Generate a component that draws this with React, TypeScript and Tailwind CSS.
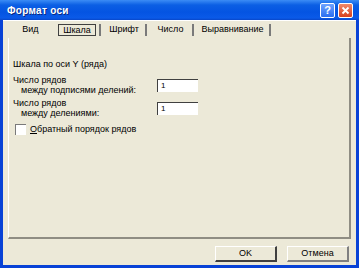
import React from 'react';

const tabs = [
  { label: 'Вид', w: 'w-[45px]', sep: false },
  { label: 'Шкала', w: 'w-[48px]', sep: true, active: true },
  { label: 'Шрифт', w: 'w-[46px]', sep: true },
  { label: 'Число', w: 'w-[47px]', sep: true },
  { label: 'Выравнивание', w: 'w-[77px]', sep: true },
];

const App: React.FC = () => {
  return (
    <div className="w-[359px] h-[268px] bg-[#0842d6] flex flex-col font-['Liberation_Sans',Arial,sans-serif] text-[9px] text-black overflow-hidden">

      {/* TITLE BAR */}
      <div className="h-[20px] shrink-0 flex items-center pl-[7px] pr-[6px] bg-[linear-gradient(180deg,#3b8cf5_0%,#0b5fe4_25%,#0454e2_60%,#0a5ae8_90%,#0846c8_100%)]">
        <span className="text-white font-bold text-[10px] tracking-[0.3px] [text-shadow:1px_1px_0_#0a2a80]">
          Формат оси
        </span>
        <div className="ml-auto flex items-center gap-[3px]">
          <div className="w-[15px] h-[15px] rounded-[2px] border border-white bg-[linear-gradient(180deg,#6fa3ff,#2a6ef0)] flex items-center justify-center text-white font-bold text-[11px] leading-none">
            ?
          </div>
          <div className="w-[15px] h-[15px] rounded-[2px] border border-white bg-[linear-gradient(180deg,#f08a6a,#d6401e)] flex items-center justify-center">
            <svg width="9" height="9" viewBox="0 0 9 9">
              <path d="M1.5 1.5 L7.5 7.5 M7.5 1.5 L1.5 7.5" stroke="white" strokeWidth="1.8" />
            </svg>
          </div>
        </div>
      </div>

      {/* BODY */}
      <div className="flex-1 mx-[3px] mb-[3px] bg-[#ece9d8] border-t border-white flex flex-col px-[5px]">

        {/* TABS */}
        <div className="h-[16px] mt-[1px] flex items-center">
          {tabs.map((t) => (
            <div key={t.label} className={`${t.w} h-full flex items-center justify-center relative`}>
              {t.active ? (
                <span className="border border-[#404040] px-[4px] h-[12px] leading-[10px]">{t.label}</span>
              ) : (
                <span>{t.label}</span>
              )}
              {t.sep && <div className="absolute right-0 top-[2px] h-[12px] w-[2px] bg-[#7a7a7a]" />}
            </div>
          ))}
        </div>

        {/* PANEL */}
        <div className="h-[201px] border-r-[2px] border-b-[2px] border-[#8f8d83] border-l border-l-white pl-[4px] pt-[21px]">
          <div className="h-[11px] leading-[11px]">Шкала по оси Y (ряда)</div>

          <div className="mt-[6px] flex">
            <div className="w-[144px]">
              <div className="leading-[9px]">Число рядов</div>
              <div className="leading-[10px] pl-[8px]">между подписями делений:</div>
            </div>
            <div className="mt-[3px] w-[41px] h-[13px] bg-white border-l border-t border-[#404040] text-[8px] leading-[12px] pl-[3px]">1</div>
          </div>

          <div className="mt-[4px] flex">
            <div className="w-[144px]">
              <div className="leading-[9px]">Число рядов</div>
              <div className="leading-[10px] pl-[8px]">между делениями:</div>
            </div>
            <div className="mt-[3px] w-[41px] h-[13px] bg-white border-l border-t border-[#404040] text-[8px] leading-[12px] pl-[3px]">1</div>
          </div>

          <div className="mt-[5px] flex items-center gap-[4px] pl-[2px]">
            <div className="w-[11px] h-[11px] bg-white border-l border-t border-[#7a7a7a]" />
            <span><span className="underline">О</span>братный порядок рядов</span>
          </div>
        </div>

        {/* BUTTONS */}
        <div className="flex justify-end gap-[10px] mt-[7px] pr-[2px]">
          <div className="w-[62px] h-[16px] border-t border-l border-white border-r-[2px] border-b-[2px] border-r-[#404040] border-b-[#404040] flex items-center justify-center text-[9px]">
            OK
          </div>
          <div className="w-[62px] h-[16px] border-t border-l border-white border-r-[2px] border-b-[2px] border-r-[#808080] border-b-[#808080] flex items-center justify-center text-[9px]">
            Отмена
          </div>
        </div>
      </div>
    </div>
  );
};

export default App;
